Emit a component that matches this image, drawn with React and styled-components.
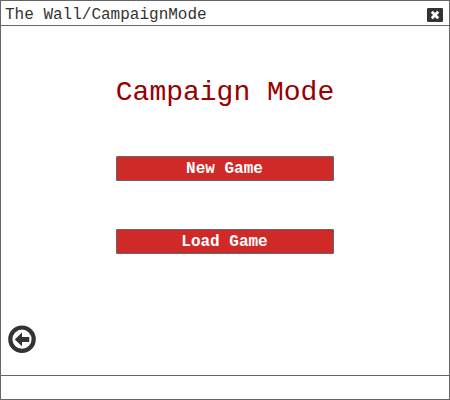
import React from "react";
import styled, { createGlobalStyle } from "styled-components";

const GlobalStyle = createGlobalStyle`
  *, *::before, *::after { box-sizing: border-box; }
  body { margin: 0; background: #fff; }
`;

const Window = styled.div`
  width: 450px;
  height: 400px;
  display: grid;
  grid-template-rows: 25px 1fr 24px;
  border: 1px solid #666;
  background: #fff;
  font-family: "Liberation Mono", "Courier New", monospace;
`;

const TitleBar = styled.header`
  display: flex;
  align-items: flex-start;
  justify-content: space-between;
  padding: 5px 6px 0 4px;
  border-bottom: 1px solid #666;
`;

const Title = styled.span`
  font-size: 16px;
  line-height: 18px;
  color: #333;
  white-space: pre;
`;

const IconButton = styled.button`
  display: flex;
  padding: 0;
  border: 0;
  background: none;
  color: #333;
`;

const CloseButton = styled(IconButton)`
  margin-top: 2px;
`;

const Content = styled.main`
  display: flex;
  flex-direction: column;
  align-items: center;
  padding-top: 51px;
`;

const Heading = styled.h1`
  margin: 0 0 47px;
  font-size: 28px;
  line-height: 32px;
  font-weight: 400;
  color: #990000;
  white-space: nowrap;
`;

const MenuButton = styled.button`
  width: 218px;
  height: 25px;
  margin-bottom: 48px;
  padding: 0 1px 0 0;
  border: 1px solid #666;
  border-radius: 1px;
  background: #d02a28;
  color: #fff;
  font: bold 16px/20px "Liberation Mono", "Courier New", monospace;
`;

const BackButton = styled(IconButton)`
  align-self: flex-start;
  margin: 23px 0 0 7px;
`;

const StatusBar = styled.footer`
  border-top: 1px solid #666;
`;

export default function App() {
  return (
    <>
      <GlobalStyle />
      <Window>
        <TitleBar>
          <Title>The Wall/CampaignMode</Title>
          <CloseButton aria-label="Close">
            <svg width="16" height="14" viewBox="0 0 16 14">
              <rect width="16" height="14" rx="1.2" fill="currentColor" />
              <path d="M4.8 3.8l6.4 6.4M11.2 3.8l-6.4 6.4" stroke="#fff" strokeWidth="2.8" />
            </svg>
          </CloseButton>
        </TitleBar>
        <Content>
          <Heading>Campaign Mode</Heading>
          <MenuButton>New Game</MenuButton>
          <MenuButton>Load Game</MenuButton>
          <BackButton aria-label="Back">
            <svg width="28" height="28" viewBox="0 0 28 28">
              <circle cx="14" cy="14.2" r="11.7" fill="none" stroke="currentColor" strokeWidth="4.2" />
              <path d="M6.8 14.4l7.2-6.8v4.3h7.2v5h-7.2v4.3z" fill="currentColor" />
            </svg>
          </BackButton>
        </Content>
        <StatusBar />
      </Window>
    </>
  );
}
